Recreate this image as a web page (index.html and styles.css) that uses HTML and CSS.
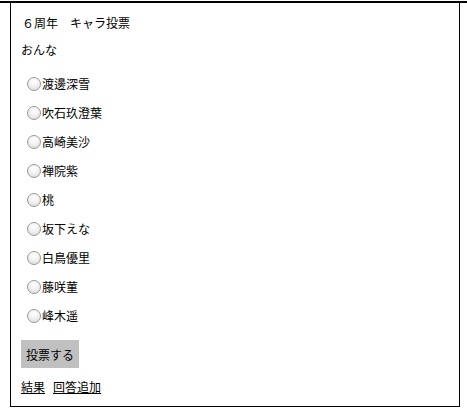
FILE: index.html
```html
<!DOCTYPE html>
<html lang="ja">
<head>
  <meta charset="UTF-8">
  <title>６周年　キャラ投票</title>
  <link rel="stylesheet" href="styles.css">
</head>
<body>
  <div class="topline"></div>
  <div class="box">
    <h1 class="title">６周年　キャラ投票</h1>
    <p class="question">おんな</p>
    <form class="vote">
      <label class="choice"><input type="radio" name="chara" value="1">渡邊深雪</label>
      <label class="choice"><input type="radio" name="chara" value="2">吹石玖澄葉</label>
      <label class="choice"><input type="radio" name="chara" value="3">高崎美沙</label>
      <label class="choice"><input type="radio" name="chara" value="4">禅院紫</label>
      <label class="choice"><input type="radio" name="chara" value="5">桃</label>
      <label class="choice"><input type="radio" name="chara" value="6">坂下えな</label>
      <label class="choice"><input type="radio" name="chara" value="7">白鳥優里</label>
      <label class="choice"><input type="radio" name="chara" value="8">藤咲菫</label>
      <label class="choice"><input type="radio" name="chara" value="9">峰木遥</label>
      <button type="submit" class="submit">投票する</button>
    </form>
    <div class="links">
      <a href="#">結果</a>
      <a href="#">回答追加</a>
    </div>
  </div>
</body>
</html>
```

FILE: styles.css
```css
body {
  margin: 0;
  padding-top: 1px;
  font-family: "Noto Sans CJK JP", "Liberation Sans", sans-serif;
  font-size: 12px;
  color: #000;
  background: #fff;
}
.topline {
  height: 2px;
  background: #000;
}
.box {
  box-sizing: border-box;
  width: 450px;
  margin-left: 10px;
  padding: 10px 10px 9px 10px;
  border: 1px solid #000;
  border-top: none;
}
.title {
  margin: 0;
  font-size: 12px;
  font-weight: normal;
  line-height: 20px;
  padding-left: 1px;
}
.question {
  margin: 7px 0 0;
  line-height: 20px;
}
.vote {
  display: flex;
  flex-direction: column;
  align-items: flex-start;
  margin-top: 9px;
}
.choice {
  display: flex;
  align-items: center;
  height: 29px;
}
.choice input[type="radio"] {
  appearance: none;
  -webkit-appearance: none;
  box-sizing: border-box;
  width: 14px;
  height: 14px;
  margin: 0 1px 0 6px;
  border: 1px solid #9a9a9a;
  border-radius: 50%;
  background: radial-gradient(circle at 50% 30%, #ffffff 0%, #f2f2f2 45%, #d6d6d6 100%);
}
.submit {
  margin-top: 10px;
  height: 28px;
  padding: 0 5px;
  border: none;
  background: #c0c0c0;
  font-family: inherit;
  font-size: 12px;
  color: #000;
}
.links {
  display: flex;
  gap: 8px;
  margin-top: 9px;
  line-height: 20px;
}
.links a {
  color: #000;
}
```
